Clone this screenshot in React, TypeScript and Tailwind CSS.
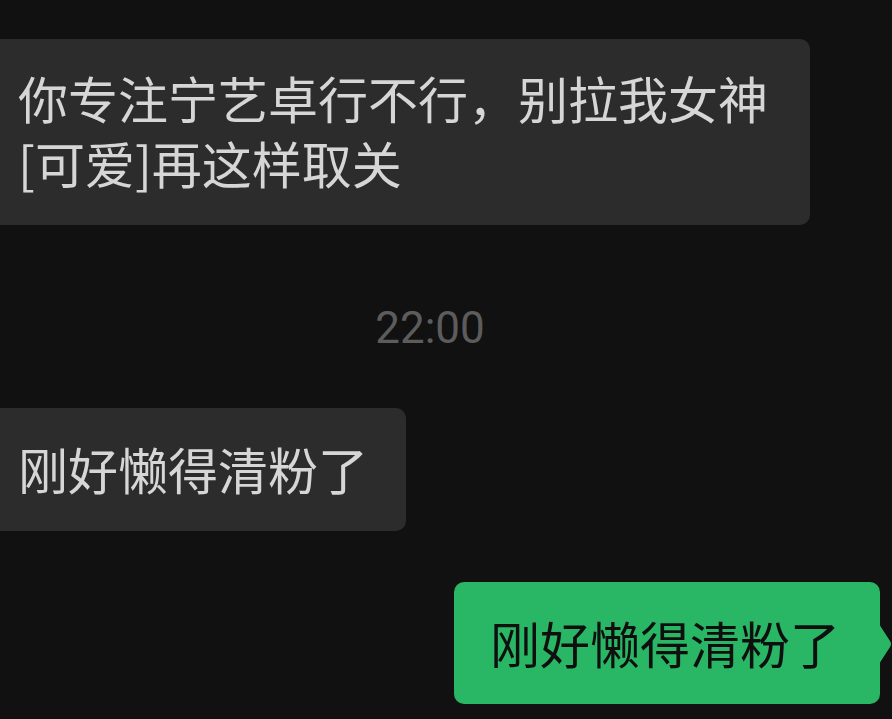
import React from "react";

const cjk = { fontFamily: '"Noto Sans CJK SC", "Noto Sans", sans-serif' };

export default function App() {
  return (
    <div className="w-[892px] h-[719px] overflow-hidden bg-[#111111] flex flex-col" style={cjk}>
      <div className="mt-[39px] w-[810px] h-[186px] rounded-r-[10px] bg-[#2c2c2c] pl-[18px] pr-[30px] pt-[26px] text-[50px] leading-[65px] text-[#d6d6d6]">
        <div>你专注宁艺卓行不行，别拉我女神</div>
        <div>[可爱]再这样取关</div>
      </div>
      <div className="mt-[82px] h-[42px] flex items-center justify-center pr-[32px] text-[44px] text-[#5c5c5c]" style={{ fontFamily: 'Roboto, "Noto Sans", sans-serif' }}>
        22:00
      </div>
      <div className="mt-[59px] w-[406px] h-[123px] rounded-r-[10px] bg-[#2c2c2c] pl-[18px] pb-[2px] flex items-center text-[50px] leading-[65px] text-[#d6d6d6]">
        刚好懒得清粉了
      </div>
      <div className="mt-[51px] self-end mr-[12px] relative">
        <div className="w-[426px] h-[122px] rounded-[10px] bg-[#2ab765] pl-[36px] pb-[2px] flex items-center text-[50px] leading-[65px] text-[#0f0f0f]">
          刚好懒得清粉了
        </div>
        <svg className="absolute right-[-13px] top-[42px]" width="14" height="40" viewBox="0 0 14 40">
          <path d="M0 0 L11 17 Q13 20 11 23 L0 40 Z" fill="#2ab765" />
        </svg>
      </div>
    </div>
  );
}
